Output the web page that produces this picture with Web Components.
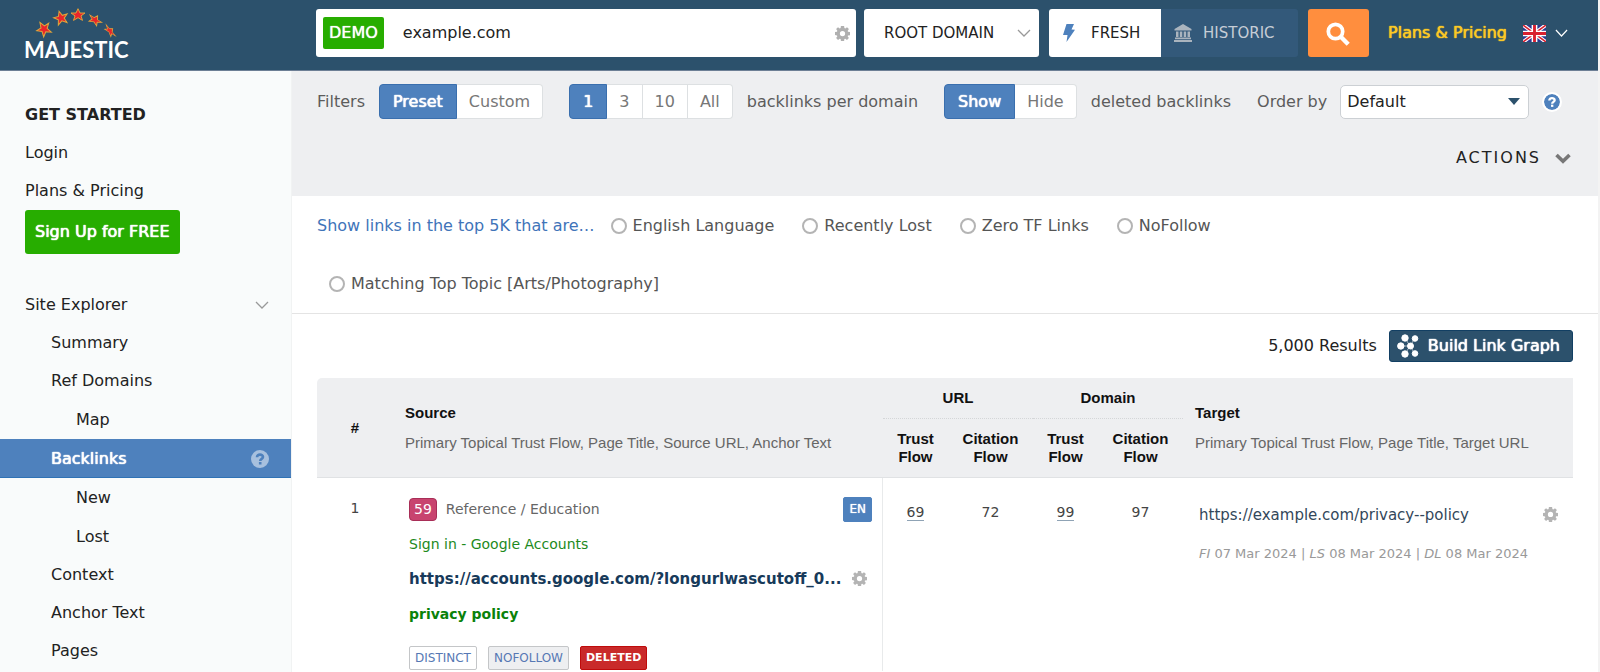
<!DOCTYPE html>
<html lang="en">
<head>
<meta charset="utf-8">
<title>Backlinks - Majestic</title>
<style>
html { background: #f3f3f3; }
body { margin: 0 2px 0 0; background: #fff; color: #222; font: 16px/20px "DejaVu Sans", Verdana, sans-serif; overflow: hidden; --heavy: 0 0 1px currentColor, 0 0 1px currentColor; }
</style>
</head>
<body>
<mj-app>
  <mj-header slot="header"></mj-header>
  <mj-sidebar slot="sidebar"></mj-sidebar>
  <mj-filter-bar></mj-filter-bar>
  <mj-quick-filters></mj-quick-filters>
  <mj-results></mj-results>
</mj-app>
<script>
const BASE = `
  :host, *, ::before { box-sizing: border-box; }
  button, input, select { font: inherit; color: inherit; margin: 0; }
  a { color: inherit; text-decoration: none; }
`;
function define(name, css, html) {
  const template = document.createElement('template');
  template.innerHTML = `<style>${BASE}${css}</style>${html}`;
  customElements.define(name, class extends HTMLElement {
    constructor() {
      super();
      this.attachShadow({ mode: 'open' }).append(template.content.cloneNode(true));
    }
  });
}

const GLYPHS = {
  gear: ['0 0 16 16', '<path fill="currentColor" fill-rule="evenodd" d="M6.300 0h3.400l.3 2.200 1 .4L12.800 1.300l2 2-1.300 1.900.4 1 2.100.2v3.400l-2.100.2-.4 1 1.300 1.800-2 2-1.800-1.300-1 .4-.3 2.100H6.300L6 13.900l-1-.4-1.800 1.300-2-2 1.300-1.800-.4-1L0 9.700V6.300l2.100-.2.4-1L1.200 3.300l2-2L5 2.600l1-.4zM8 5.200a2.800 2.800 0 1 0 0 5.600 2.800 2.800 0 0 0 0-5.600z"/>'],
  chevron: ['0 0 14 8', '<path fill="none" stroke="currentColor" stroke-width="1.3" d="M1 1l6 6 6-6"/>'],
  thick: ['0 0 16 11', '<path fill="none" stroke="currentColor" stroke-width="3.6" d="M1.500 2l6.500 6.300L14.500 2"/>'],
  bolt: ['0 0 12 18', '<path fill="currentColor" d="M3.500 0H11L8.500 5.500l3.500.2L3.500 18l1-7H0z"/>'],
  bank: ['0 0 18 18', '<path fill="currentColor" d="M9 0l8.500 5v1.500H.5V5zM2 7.500h2.500V13H2zm3.800 0h2.500V13H5.800zm3.900 0h2.500V13H9.700zm3.800 0H16V13h-2.500zM1 13.500h16v1.800H1zM0 16h18v2H0z"/>'],
  search: ['0 0 24 24', '<g fill="none" stroke="currentColor" stroke-width="3.700"><circle cx="9.500" cy="9.500" r="7.200"/><path stroke-width="4.400" d="M14.500 14.500l7.700 7.700"/></g>'],
  help: ['0 0 18 18', '<circle cx="9" cy="9" r="9" fill="currentColor"/><path fill="none" stroke="var(--mark,#fff)" stroke-width="2.600" d="M6 7.200C6 5.300 7.300 4.600 9 4.600s3 .8 3 2.400c0 1.900-2.800 1.800-2.800 4"/><path fill="var(--mark,#fff)" d="M7.900 12h2.600v2.500H7.900z"/>'],
  caret: ['0 0 12 7', '<path fill="currentColor" d="M0 0h12L6 7z"/>'],
  graph: ['0 0 22 24', '<g fill="currentColor" stroke="currentColor"><path d="M8 4l5 8 5-8M8 20l5-8 5 8M4 12h9" fill="none" stroke-width="1" opacity=".6"/><circle cx="8" cy="4" r="3.200"/><circle cx="18" cy="4.500" r="2.800"/><circle cx="3.800" cy="12" r="3.200"/><circle cx="13.500" cy="12" r="3"/><circle cx="8" cy="20" r="3.200"/><circle cx="18" cy="19.500" r="2.800"/></g>'],
  flag: ['0 0 24 18', '<path fill="#2b3990" d="M0 0h24v18H0z"/><path stroke="#fff" stroke-width="4" d="M0 0l24 18M24 0L0 18"/><path stroke="#d8202f" stroke-width="1.600" d="M0 0l24 18M24 0L0 18"/><path stroke="#fff" stroke-width="6" d="M12 0v18M0 9h24"/><path stroke="#d8202f" stroke-width="3" d="M12 0v18M0 9h24"/>']
};
customElements.define('mj-icon', class extends HTMLElement {
  connectedCallback() {
    if (this.shadowRoot) return;
    const [box, art] = GLYPHS[this.getAttribute('name')];
    this.attachShadow({ mode: 'open' }).innerHTML =
      `<style>:host{display:inline-block;flex:none}svg{display:block;width:100%;height:100%}</style><svg viewBox="${box}" preserveAspectRatio="none" aria-hidden="true">${art}</svg>`;
  }
});

define('mj-app', `
  :host { display: block; }
  .columns { display: grid; grid-template-columns: 292px minmax(0, 1fr); min-height: calc(100vh - 71px); }
`, `
  <slot name="header"></slot>
  <div class="columns"><slot name="sidebar"></slot><main><slot></slot></main></div>
`);

define('mj-logo', `
  :host { display: block; }
  svg { display: block; width: 112px; height: 60px; }
  text { font: 700 22px Lato, "Open Sans", sans-serif; fill: #fff; }
  polygon { fill: #e9252b; stroke: #e0a63a; stroke-width: 1; }
`, `
  <svg viewBox="0 0 112 60" role="img" aria-label="Majestic">
    <polygon transform="translate(19 26) rotate(-32) scale(1 1.100)" points="0,-7 2,-2.200 7,-2.200 3,1 4.500,6 0,3 -4.500,6 -3,1 -7,-2.200 -2,-2.200"/>
    <polygon transform="translate(36 15) rotate(-16)" points="0,-7 2,-2.200 7,-2.200 3,1 4.500,6 0,3 -4.500,6 -3,1 -7,-2.200 -2,-2.200"/>
    <polygon transform="translate(53 12) scale(1 .9)" points="0,-7 2,-2.200 7,-2.200 3,1 4.500,6 0,3 -4.500,6 -3,1 -7,-2.200 -2,-2.200"/>
    <polygon transform="translate(70 17) rotate(32) scale(1 .7)" points="0,-7 2,-2.200 7,-2.200 3,1 4.500,6 0,3 -4.500,6 -3,1 -7,-2.200 -2,-2.200"/>
    <polygon transform="translate(85 28) rotate(50) scale(1.050 .5)" points="0,-7 2,-2.200 7,-2.200 3,1 4.500,6 0,3 -4.500,6 -3,1 -7,-2.200 -2,-2.200"/>
    <text x="-1" y="55">MAJESTIC</text>
  </svg>
`);

define('mj-header', `
  :host { display: flex; align-items: center; height: 71px; padding: 0 30px 4px 25px; background: #2c516c; border-bottom: 1px solid #6d7f95; color: #fff; }
  mj-logo { width: 291px; }
  form { flex: 1; display: flex; gap: 8px; height: 48px; min-width: 0; }
  .query { flex: 1; display: flex; align-items: center; padding: 0 6px 0 7px; background: #fff; border-radius: 3px; min-width: 0; color: #b0b0b0; }
  .demo { padding: 6px; background: #27ad00; border-radius: 2px; color: #fff; line-height: 20px; text-shadow: 0 0 1px #fff; }
  .query input { flex: 1; min-width: 0; border: 0; padding: 0 19px; background: none; outline: 0; color: #222; }
  .gear { width: 15px; height: 15px; }
  .scope { display: grid; align-items: center; background: #fff; border-radius: 3px; width: 175px; color: #999; font-size: 15px; }
  .scope > * { grid-area: 1 / 1; }
  .scope select { appearance: none; border: 0; background: none; height: 48px; padding: 0 20px; color: #222; }
  .scope mj-icon { justify-self: end; margin-right: 8px; width: 14px; height: 8px; }
  .index { display: flex; border-radius: 3px; overflow: hidden; margin-left: 2px; font-size: 15px; }
  .index button { display: flex; align-items: center; border: 0; padding: 0 14px; }
  .fresh { background: #fff; color: #222; gap: 16px; width: 112px; }
  .fresh mj-icon { color: #4e81bd; width: 12px; height: 18px; }
  .historic { background: #33597a; color: #c6cdd6; gap: 11px; width: 137px; }
  .index .historic { padding-left: 13px; }
  .historic mj-icon { width: 18px; height: 18px; color: #aab4be; }
  .go { width: 61px; margin-left: 2px; border: 0; border-radius: 3px; background: #ff8e3e; color: #fff; display: grid; place-items: center; padding: 2px 2px 0 0; }
  .go mj-icon { width: 24px; height: 24px; }
  .plans { color: #fbc926; margin: 0 16px 0 19px; text-shadow: var(--heavy); }
  .lang { display: flex; align-items: center; gap: 9px; border: 0; background: none; padding: 0; color: #fff; }
  .lang mj-icon { width: 23px; height: 17px; }
  .lang mj-icon + mj-icon { width: 13px; height: 8px; }
`, `
  <mj-logo></mj-logo>
  <form>
    <div class="query"><span class="demo">DEMO</span><input type="text" aria-label="Site" value="example.com"><mj-icon class="gear" name="gear"></mj-icon></div>
    <div class="scope"><select aria-label="Scope"><option>ROOT DOMAIN</option></select><mj-icon name="chevron"></mj-icon></div>
    <div class="index">
      <button type="button" class="fresh"><mj-icon name="bolt"></mj-icon>FRESH</button>
      <button type="button" class="historic"><mj-icon name="bank"></mj-icon>HISTORIC</button>
    </div>
    <button type="button" class="go" aria-label="Search"><mj-icon name="search"></mj-icon></button>
  </form>
  <a class="plans" href="#plans">Plans &amp; Pricing</a>
  <button class="lang" aria-label="Language"><mj-icon name="flag"></mj-icon><mj-icon name="chevron"></mj-icon></button>
`);

define('mj-nav-item', `
  :host { display: block; --indent: 25px; --row: 38px; }
  :host([level="2"]) { --indent: 51px; }
  :host([level="3"]) { --indent: 76px; --row: 39px; }
  :host([active]) { --row: 39px; background: #4e81bd; color: #fff; text-shadow: var(--heavy); box-shadow: inset 0 -1px #2f72b5; }
  a { display: flex; align-items: center; justify-content: space-between; height: var(--row); padding: 0 22px 0 var(--indent); }
`, `<a href="#"><slot></slot><slot name="end"></slot></a>`);

define('mj-sidebar', `
  :host { display: block; background: #f9fbfb; border-right: 1px solid #f1f3f3; padding-top: 25px; }
  h2 { margin: 0; padding-left: 25px; font-size: 16px; line-height: 38px; }
  .signup { display: inline-block; margin: 0 0 32px 25px; border: 0; border-radius: 3px; background: #27ad00; color: #fff; height: 44px; padding: 0 10px; text-shadow: var(--heavy); }
  .arrow { width: 14px; height: 8px; color: #999; }
  .help { width: 18px; height: 18px; color: #a7c0de; --mark: #4e81bd; }
`, `
  <h2>GET STARTED</h2>
  <mj-nav-item>Login</mj-nav-item>
  <mj-nav-item>Plans &amp; Pricing</mj-nav-item>
  <button class="signup">Sign Up for FREE</button>
  <nav>
    <mj-nav-item>Site Explorer<mj-icon slot="end" class="arrow" name="chevron"></mj-icon></mj-nav-item>
    <mj-nav-item level="2">Summary</mj-nav-item>
    <mj-nav-item level="2">Ref Domains</mj-nav-item>
    <mj-nav-item level="3">Map</mj-nav-item>
    <mj-nav-item level="2" active>Backlinks<mj-icon slot="end" class="help" name="help"></mj-icon></mj-nav-item>
    <mj-nav-item level="3">New</mj-nav-item>
    <mj-nav-item level="3">Lost</mj-nav-item>
    <mj-nav-item level="2">Context</mj-nav-item>
    <mj-nav-item level="2">Anchor Text</mj-nav-item>
    <mj-nav-item level="2">Pages</mj-nav-item>
  </nav>
`);

customElements.define('mj-segmented', class extends HTMLElement {
  connectedCallback() {
    if (this.shadowRoot) return;
    const items = this.getAttribute('options').split(',');
    this.attachShadow({ mode: 'open' }).innerHTML = `<style>
      :host { display: flex; height: 35px; }
      button { font: inherit; color: #777; background: #fff; border: 1px solid #dde0e2; border-left-width: 0; padding: 0 12px; margin: 0; }
      button:first-of-type { background: #4e81bd; border: 1px solid #3a6fae; color: #fff; border-radius: 4px 0 0 4px; padding: 0 13px; text-shadow: var(--heavy); }
      button:last-of-type { border-radius: 0 4px 4px 0; }
    </style>` + items.map((t, i) => `<button type="button" aria-pressed="${i === 0}">${t}</button>`).join('');
  }
});

define('mj-filter-bar', `
  :host { display: block; height: 125px; background: #eeeff1; padding: 13px 27px 0 25px; color: #5c5c5c; }
  .row { display: flex; align-items: center; gap: 26px; height: 35px; white-space: nowrap; }
  .group { display: flex; align-items: center; gap: 14px; }
  .order { gap: 13px; }
  .pick { display: grid; align-items: center; color: #2c516c; width: 189px; }
  .pick > * { grid-area: 1 / 1; }
  .pick select { appearance: none; height: 34px; padding: 0 6px; border: 1px solid #ccd0d4; border-radius: 5px; background: #fff; color: #222; }
  .pick mj-icon { justify-self: end; margin-right: 9px; width: 12px; height: 7px; }
  .help { width: 16px; height: 16px; color: #4e81bd; border-radius: 9px; outline: 2px solid #fff; margin-left: 2px; }
  .actions { display: flex; align-items: center; gap: 14px; margin: 29px 0 0 auto; border: 0; background: none; padding: 0; color: #222; letter-spacing: 2px; }
  .actions mj-icon { width: 16px; height: 11px; color: #777; }
`, `
  <div class="row">
    <div class="group"><span>Filters</span><mj-segmented options="Preset,Custom"></mj-segmented></div>
    <div class="group"><mj-segmented options="1,3,10,All"></mj-segmented><span>backlinks per domain</span></div>
    <div class="group"><mj-segmented options="Show,Hide"></mj-segmented><span>deleted backlinks</span></div>
    <div class="group order"><label for="order">Order by</label><div class="pick"><select id="order"><option>Default</option></select><mj-icon name="caret"></mj-icon></div><mj-icon class="help" name="help"></mj-icon></div>
  </div>
  <button class="actions">ACTIONS<mj-icon name="thick"></mj-icon></button>
`);

define('mj-quick-filters', `
  :host { display: flex; flex-wrap: wrap; align-content: flex-start; column-gap: 28px; height: 118px; padding: 1px 300px 0 25px; border-bottom: 1px solid #e4e4e4; color: #555; }
  .lead { display: flex; align-items: center; gap: 16px; color: #3f74b9; }
  label { display: flex; align-items: center; gap: 6px; height: 58px; color: #555; white-space: nowrap; }
  label.next { margin-left: 12px; }
  input { appearance: none; width: 16px; height: 16px; border: 2px solid #b4b4b4; border-radius: 8px; background: #fff; }
`, `
  <div class="lead"><a href="#top">Show links in the top 5K that are…</a><label><input type="radio" name="quick">English Language</label></div>
  <label><input type="radio" name="quick">Recently Lost</label>
  <label><input type="radio" name="quick">Zero TF Links</label>
  <label><input type="radio" name="quick">NoFollow</label>
  <label class="next"><input type="radio" name="quick">Matching Top Topic [Arts/Photography]</label>
`);

define('mj-tag', `
  :host { display: inline-block; padding: 0 5px; border: 1px solid #c4c6c8; border-radius: 2px; background: #fff; color: #5678b4; font-size: 12px; line-height: 22px; }
  :host([kind="muted"]) { background: #eeeff1; }
  :host([kind="danger"]) { background: #c92a2a; border-color: #bf0b0b; color: #fff; font-weight: 700; font-size: 11px; }
  :host([kind="lang"]) { background: #4e81bd; border-color: #4e81bd; color: #fff; text-shadow: 0 0 1px #fff; line-height: 23px; }
  :host([kind="score"]) { background: #c8446f; border-color: #a82e57; border-radius: 4px; padding: 0 4px; color: #fff; font-size: 14px; line-height: 21px; }
`, `<slot></slot>`);

define('mj-results', `
  :host { display: block; padding: 16px 25px 0 25px; }
  .bar { display: flex; align-items: center; justify-content: flex-end; gap: 12px; margin-bottom: 16px; }
  .build { display: flex; align-items: center; gap: 9px; height: 32px; border: 1px solid #123f63; border-radius: 3px; background: #2c516c; color: #fff; padding: 0 12px 0 7px; text-shadow: var(--heavy); }
  .build mj-icon { width: 22px; height: 24px; }
  table { width: 100%; border-collapse: separate; border-spacing: 0; table-layout: fixed; }
  thead { font: 15px/18px "Liberation Sans", Arial, sans-serif; }
  th { background: #eeeff1; padding: 0; color: #111; }
  thead tr:first-child th:first-child { border-radius: 5px 0 0 0; }
  .left { text-align: left; padding-left: 12px; }
  .left p { margin: 12px 0 0; font-weight: 400; color: #666; white-space: nowrap; }
  .top { height: 41px; border-bottom: 1px dotted #d4d6d8; }
  .sub { height: 59px; }
  .end { border-bottom: 1px solid #e0e2e4; }
  td { vertical-align: top; padding: 20px 0 0; text-align: center; font-size: 14px; height: 193px; color: #444; }
  td.source { text-align: left; padding: 18px 10px 0 16px; border-right: 1px solid #e8eaeb; }
  td.num { padding-top: 24px; }
  .num a { border-bottom: 1px solid #8fa3b5; }
  .line { display: flex; align-items: center; justify-content: space-between; height: 35px; white-space: nowrap; }
  .line span { display: flex; align-items: center; gap: 9px; }
  .line.first { height: 26px; margin-bottom: 4px; color: #666; }
  .title { color: #1d8a1d; }
  .anchor { color: #0a820a; font-weight: 700; }
  .url { color: #173a5a; font-weight: 700; font-size: 15px; }
  .gear { width: 15px; height: 15px; color: #b4b4b4; margin-right: 5px; }
  .tags { display: flex; gap: 11px; margin-top: 15px; }
  td.target { text-align: left; padding: 19px 10px 0 16px; }
  .target .line { color: #33475a; font-size: 15px; }
  .dates { font-size: 13px; color: #999; margin: 12px 0 0; white-space: nowrap; }
`, `
  <div class="bar"><span>5,000 Results</span><button class="build"><mj-icon name="graph"></mj-icon>Build Link Graph</button></div>
  <table>
    <colgroup><col style="width:76px"><col><col style="width:65px"><col style="width:85px"><col style="width:65px"><col style="width:85px"><col style="width:390px"></colgroup>
    <thead>
      <tr>
        <th rowspan="2" class="end">#</th>
        <th rowspan="2" class="end left">Source<p>Primary Topical Trust Flow, Page Title, Source URL, Anchor Text</p></th>
        <th colspan="2" class="top">URL</th><th colspan="2" class="top">Domain</th>
        <th rowspan="2" class="end left">Target<p>Primary Topical Trust Flow, Page Title, Target URL</p></th>
      </tr>
      <tr><th class="sub end">Trust<br>Flow</th><th class="sub end">Citation<br>Flow</th><th class="sub end">Trust<br>Flow</th><th class="sub end">Citation<br>Flow</th></tr>
    </thead>
    <tbody>
      <tr>
        <td>1</td>
        <td class="source">
          <div class="line first"><span><mj-tag kind="score">59</mj-tag>Reference / Education</span><mj-tag kind="lang">EN</mj-tag></div>
          <div class="line title">Sign in - Google Accounts</div>
          <div class="line url"><a href="#url">https://accounts.google.com/?longurlwascutoff_0...</a><mj-icon class="gear" name="gear"></mj-icon></div>
          <div class="line anchor">privacy policy</div>
          <div class="tags"><mj-tag>DISTINCT</mj-tag><mj-tag kind="muted">NOFOLLOW</mj-tag><mj-tag kind="danger">DELETED</mj-tag></div>
        </td>
        <td class="num"><a href="#tf">69</a></td><td class="num">72</td><td class="num"><a href="#dtf">99</a></td><td class="num">97</td>
        <td class="target">
          <div class="line"><a href="#target">https://example.com/privacy--policy</a><mj-icon class="gear" name="gear"></mj-icon></div>
          <p class="dates"><i>FI</i> 07 Mar 2024 | <i>LS</i> 08 Mar 2024 | <i>DL</i> 08 Mar 2024</p>
        </td>
      </tr>
    </tbody>
  </table>
`);
</script>
</body>
</html>
